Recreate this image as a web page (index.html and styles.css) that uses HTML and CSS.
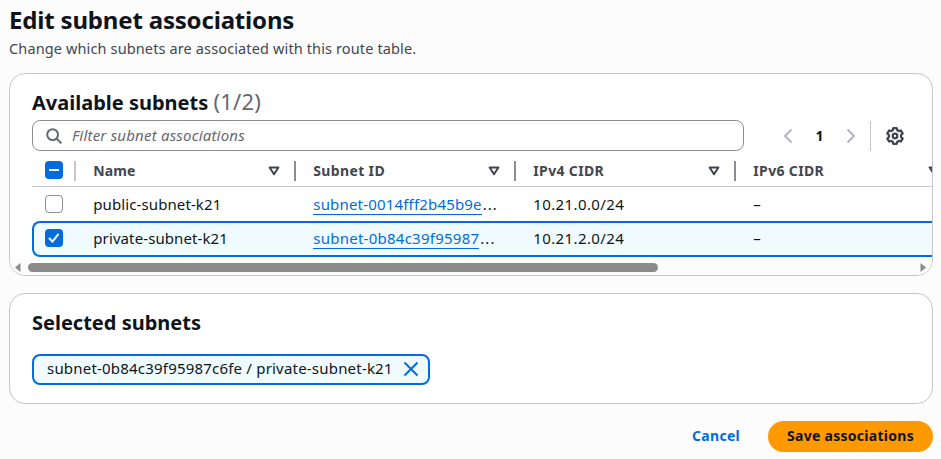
FILE: index.html
```html
<!DOCTYPE html>
<html lang="en">
<head>
<meta charset="utf-8">
<title>Edit subnet associations</title>
<link rel="stylesheet" href="styles.css">
</head>
<body>
<main class="page">
  <header class="page-header">
    <h1>Edit subnet associations</h1>
    <p>Change which subnets are associated with this route table.</p>
  </header>

  <section class="panel available">
    <h2>Available subnets <span class="count">(1/2)</span></h2>
    <div class="tools">
      <div class="search">
        <svg width="16" height="16" viewBox="0 0 16 16"><circle cx="6.6" cy="6.6" r="5.4"/><path d="M10.6 10.6 15.3 15.3"/></svg>
        <span class="t-ph">Filter subnet associations</span>
      </div>
      <div class="pager">
        <svg class="chev" width="10" height="16" viewBox="0 0 10 16"><path d="M8.500 1.500 2 8l6.500 6.500"/></svg>
        <b>1</b>
        <svg class="chev" width="10" height="16" viewBox="0 0 10 16"><path d="M1.500 1.500 8 8l-6.500 6.500"/></svg>
      </div>
      <div class="settings">
        <svg width="18" height="18" viewBox="0 0 18 18"><path d="M7.300 1.200h3.400l.6 2 1.500.85 2.100-.55 1.700 2.900L15.100 8v2l1.500 1.600-1.700 2.900-2.100-.55-1.500.85-.6 2H7.300l-.6-2-1.500-.85-2.100.55-1.700-2.900L2.900 10V8L1.400 6.400l1.700-2.900 2.100.55 1.500-.85z"/><circle cx="9" cy="9" r="2.300"/></svg>
      </div>
    </div>
    <div class="table">
      <div class="row head">
        <div class="cell pick"><span class="box on"><svg width="18" height="18" viewBox="0 0 18 18"><path d="M4 9h10"/></svg></span></div>
        <div class="cell"><span class="t-name">Name</span><svg class="sort" width="12" height="10" viewBox="0 0 12 10"><path d="M1.600 1.500h8.800L6 8.300z"/></svg></div>
        <div class="cell"><span class="t-sid">Subnet ID</span><svg class="sort" width="12" height="10" viewBox="0 0 12 10"><path d="M1.600 1.500h8.800L6 8.300z"/></svg></div>
        <div class="cell"><span class="t-sid">IPv4 CIDR</span><svg class="sort" width="12" height="10" viewBox="0 0 12 10"><path d="M1.600 1.500h8.800L6 8.300z"/></svg></div>
        <div class="cell"><span class="t-sid">IPv6 CIDR</span><svg class="sort" width="12" height="10" viewBox="0 0 12 10"><path d="M1.600 1.500h8.800L6 8.300z"/></svg></div>
      </div>
      <div class="row body">
        <div class="cell pick"><span class="box"></span></div>
        <div class="cell"><span class="t-nm">public-subnet-k21</span></div>
        <div class="cell"><a class="t-l1">subnet-0014fff2b45b9e</a><span class="dots">...</span></div>
        <div class="cell"><span class="t-ip">10.21.0.0/24</span></div>
        <div class="cell"><span>–</span></div>
      </div>
      <div class="row body selected">
        <div class="cell pick"><span class="box on"><svg width="18" height="18" viewBox="0 0 18 18"><path d="m4 9 3.500 3.500L13.600 4.800"/></svg></span></div>
        <div class="cell"><span class="t-nm">private-subnet-k21</span></div>
        <div class="cell"><a class="t-l2">subnet-0b84c39f95987</a><span class="dots">...</span></div>
        <div class="cell"><span class="t-ip">10.21.2.0/24</span></div>
        <div class="cell"><span>–</span></div>
      </div>
    </div>
    <div class="scrollbar">
      <svg width="6" height="9" viewBox="0 0 6 9"><path d="M5.500 0v9L0 4.500z"/></svg>
      <div class="track"><div class="thumb"></div></div>
      <svg width="6" height="9" viewBox="0 0 6 9"><path d="M.5 0v9L6 4.500z"/></svg>
    </div>
  </section>

  <section class="panel chosen">
    <h2>Selected subnets</h2>
    <div class="token">
      <span>subnet-0b84c39f95987c6fe / private-subnet-k21</span>
      <svg width="16" height="16" viewBox="0 0 16 16"><path d="m1.500 1.500 13 13M14.500 1.500l-13 13"/></svg>
    </div>
  </section>

  <footer class="actions">
    <a class="cancel">Cancel</a>
    <button class="save">Save associations</button>
  </footer>
</main>
</body>
</html>
```
FILE: styles.css
```css
* { box-sizing: border-box; }
body { margin: 0; background: #fcfcfc; color: #0f141a; font: 14px/20px "Noto Sans", sans-serif; overflow: hidden; }
svg { display: block; flex: none; fill: none; }
h1, h2, p { margin: 0; white-space: nowrap; }
.page { width: 941px; height: 459px; padding: 5px 8px 0 9px; }
.page-header { height: 68px; }
h1 { font-size: 24px; line-height: 30px; letter-spacing: -.18px; }
h2 { font-size: 20px; line-height: 24px; }
.page-header p { margin-top: 3px; color: #424650; font-size: 14.500px; letter-spacing: .13px; }
.panel { background: #fff; border: 1px solid #c6c6cd; border-radius: 16px; overflow: hidden; }
.available { height: 203px; padding: 17px 0 0 22px; }
.count { color: #656871; font-weight: 400; font-size: 22px; letter-spacing: .2px; line-height: 20px; }
.tools { display: flex; align-items: center; height: 31px; margin-top: 5px; }
.search { width: 712px; height: 31px; border: 1px solid #8c8c94; border-radius: 8px; display: flex; align-items: center; gap: 10px; padding-left: 13px; color: #656871; font-style: italic; }
.search svg { stroke: #656871; stroke-width: 2; }
.t-ph { font-size: 15px; letter-spacing: .2px; padding-bottom: 2px; }
.pager { display: flex; align-items: center; justify-content: space-between; width: 73px; margin-left: 39px; }
.chev { stroke: #b4b4bb; stroke-width: 2; }
.settings { border-left: 1px solid #c6c6cd; height: 30px; margin-left: 14px; padding-left: 15px; display: flex; align-items: center; }
.settings svg { stroke: #424650; stroke-width: 2.300; stroke-linejoin: round; }
.table { height: 106px; }
.row { display: grid; grid-template-columns: 44px repeat(4, 220px); height: 34px; }
.head { height: 36px; border-bottom: 1px solid #c6c6cd; font-weight: 700; color: #424650; align-items: center; padding-top: 4px; }
.cell { display: flex; align-items: center; padding-left: 17.300px; white-space: nowrap; }
.head .cell { height: 20px; border-right: 2px solid #8c8c94; padding-right: 14px; justify-content: space-between; }
.cell.pick { padding: 0 0 0 13px; }
.head .cell.pick { padding: 0 0 2px 13px; border-color: #c6c6cd; }
.sort { stroke: #424650; stroke-width: 2; stroke-linejoin: round; }
.t-name { letter-spacing: .1px; }
.t-sid { letter-spacing: .35px; }
.body { font-size: 15px; }
.t-nm { letter-spacing: .1px; }
.t-l1 { letter-spacing: .18px; }
.t-l2 { letter-spacing: .25px; }
.t-ip { letter-spacing: .38px; }
.dots { letter-spacing: 1px; padding-left: 1px; }
.box { width: 18px; height: 18px; border: 1px solid #8c8c94; border-radius: 4px; background: #fff; flex: none; }
.box.on { border: 0; background: #006ce0; }
.box svg { stroke: #fff; stroke-width: 2; }
.selected { height: 36px; background: #f0fbff; border: 2px solid #006ce0; border-right: 0; border-radius: 8px 0 0 8px; width: 924px; grid-template-columns: 42px repeat(4, 220px); }
.selected .cell:not(.pick) { padding-bottom: 2px; }
.selected .pick { padding: 0 0 2px 11px; }
a { color: #006ce0; }
.row a { border-bottom: 1px solid #006ce0; line-height: 18px; padding-bottom: 1px; margin-bottom: -1px; }
.scrollbar { display: flex; align-items: center; height: 16px; margin: 2px 0 0 -22px; padding: 0 6px 0 5px; background: #fcfcfc; }
.scrollbar svg { fill: #8b8b8b; }
.track { flex: 1; padding: 0 7px; }
.thumb { width: 630px; height: 9px; border-radius: 5px; background: #8b8b8b; }
.chosen { height: 111px; margin-top: 17px; padding: 17px 22px; }
.token { display: flex; align-items: center; justify-content: space-between; width: 398px; height: 31px; margin-top: 19px; padding: 0 9px 2px 13px; background: #f0fbff; border: 2px solid #006ce0; border-radius: 8px; white-space: nowrap; font-size: 15px; letter-spacing: .2px; }
.token span { padding-bottom: 2px; }
.token svg { stroke: #006ce0; stroke-width: 2; }
.actions { display: flex; justify-content: flex-end; align-items: center; margin-top: 17px; gap: 28px; font-weight: 700; letter-spacing: .28px; }
.cancel { padding-bottom: 2px; }
.save { width: 165px; height: 31px; border: 0; border-radius: 16px; background: #ff9900; color: #0f141a; font: inherit; letter-spacing: inherit; padding: 0 0 2px; white-space: nowrap; }
```
